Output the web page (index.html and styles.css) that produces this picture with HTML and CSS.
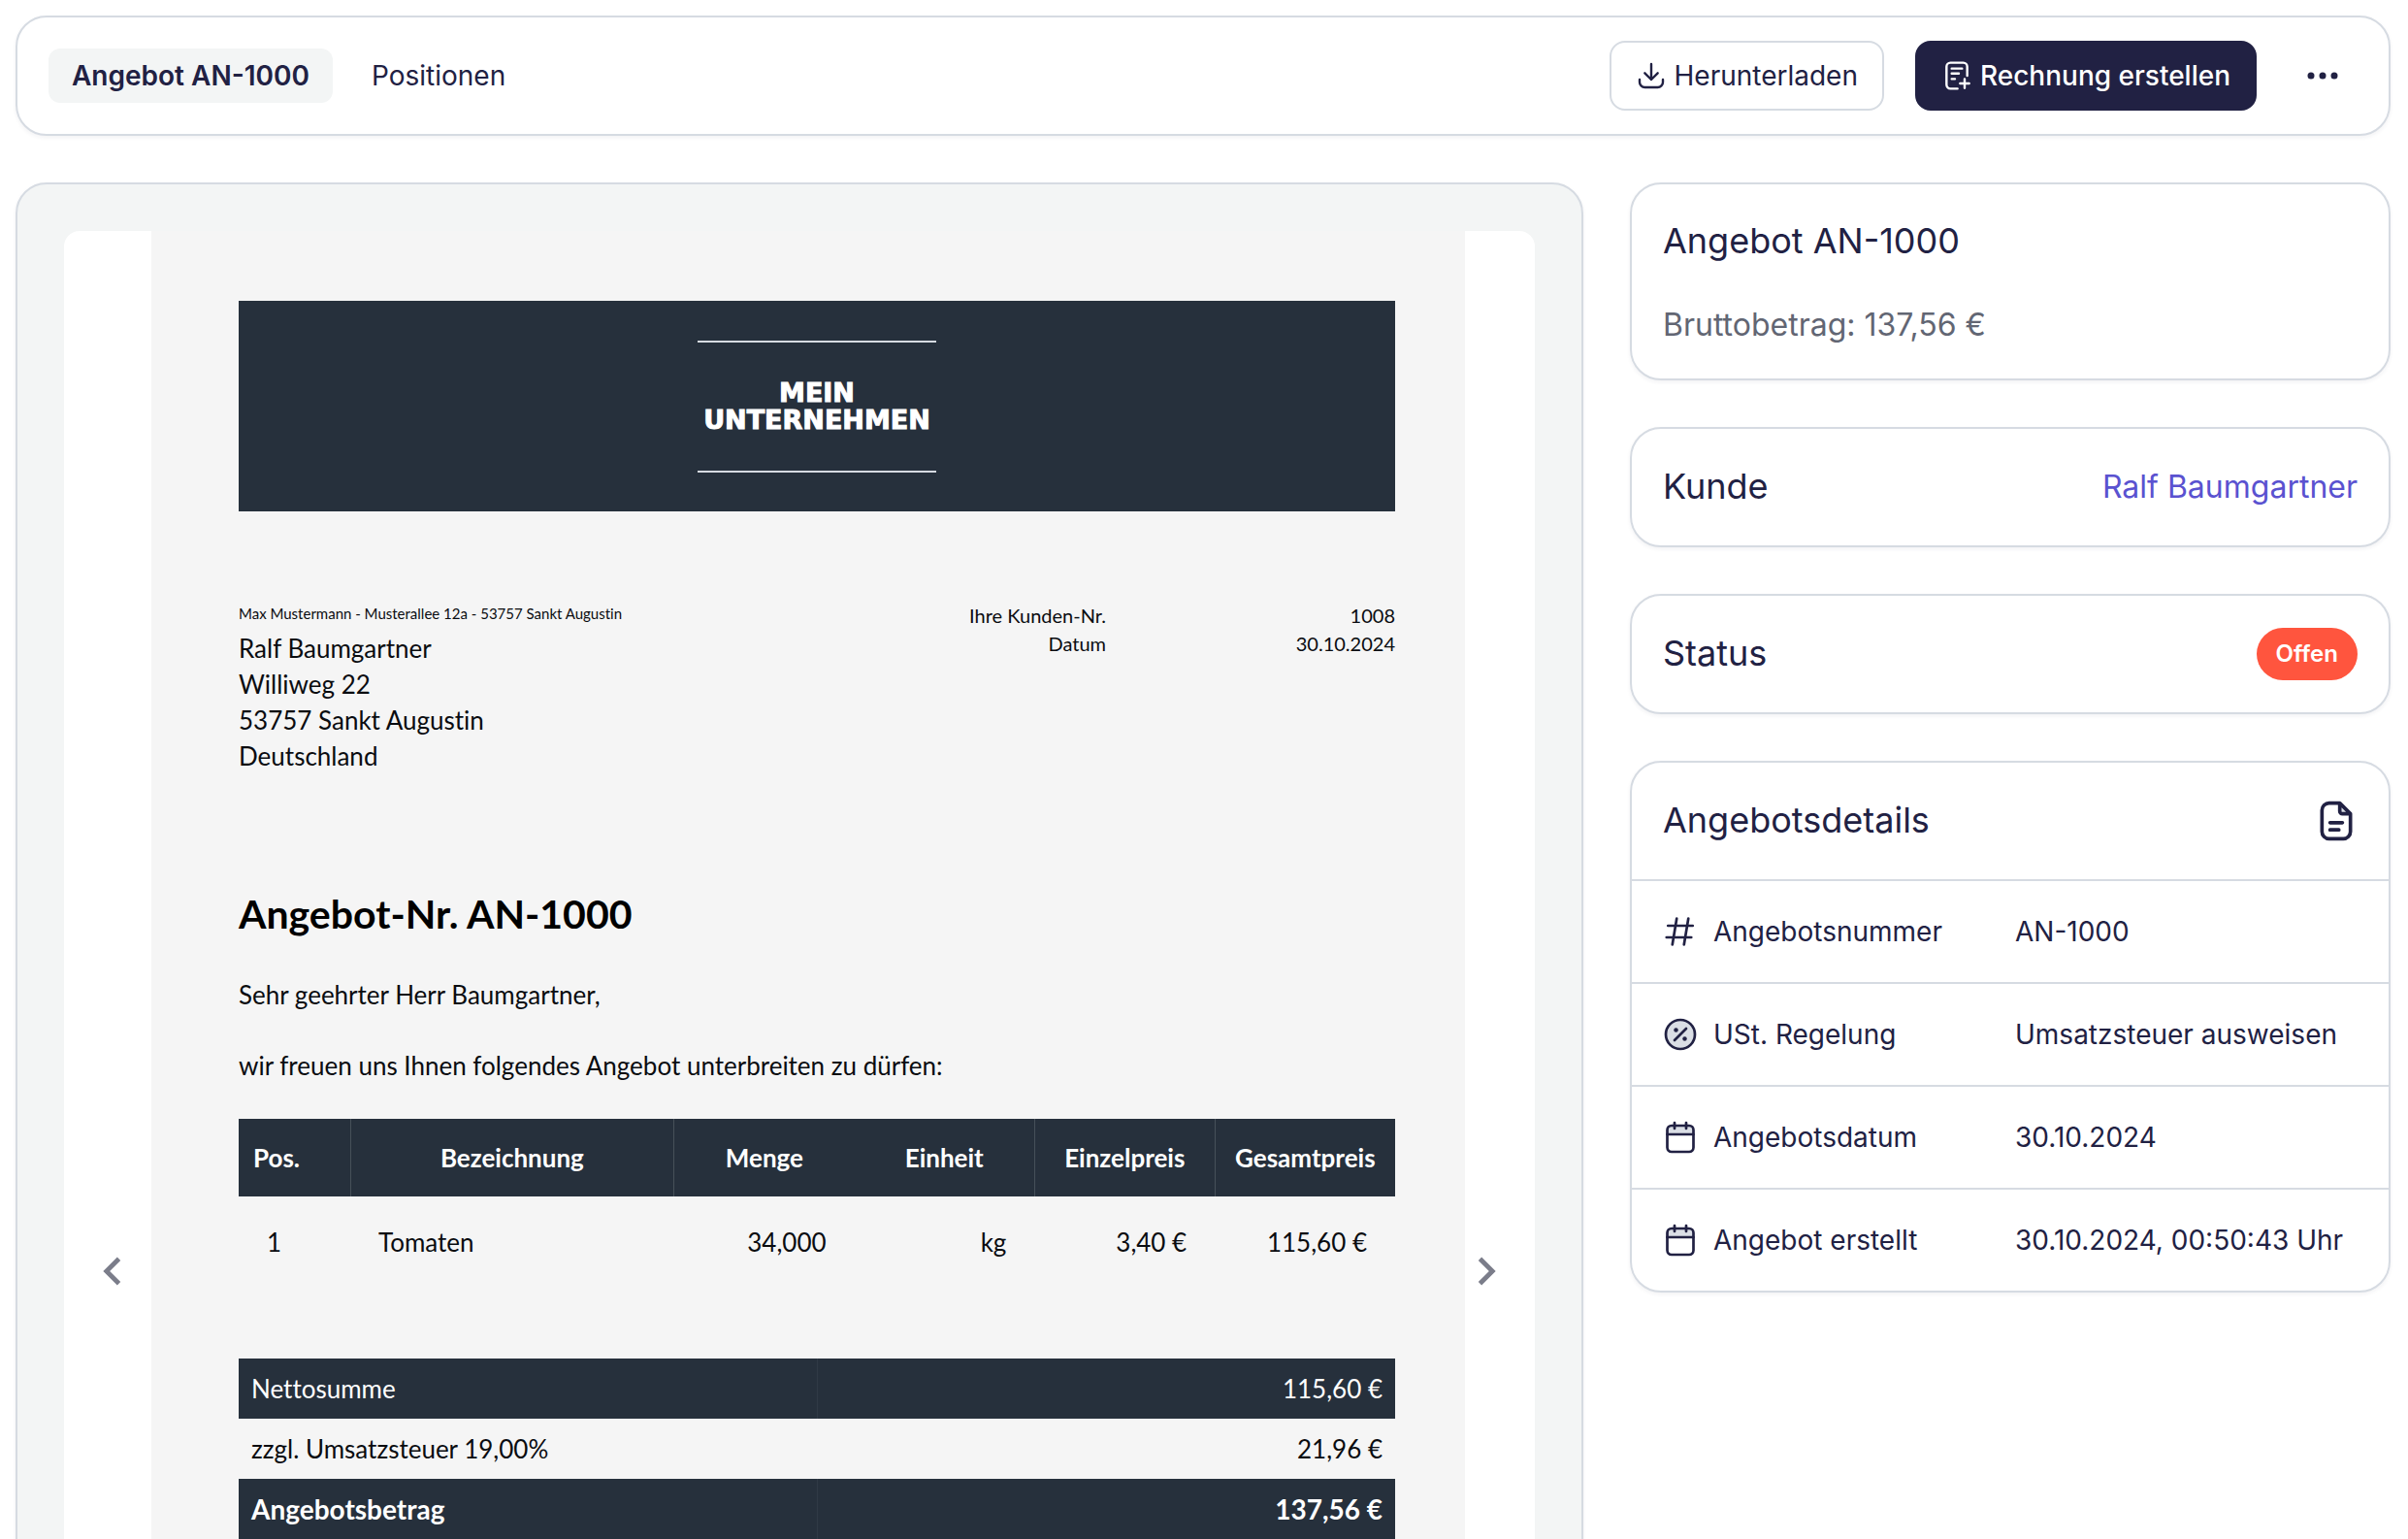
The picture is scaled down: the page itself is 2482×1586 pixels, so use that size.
FILE: index.html
```html
<!DOCTYPE html>
<html lang="de">
<head>
<meta charset="utf-8">
<meta name="viewport" content="width=device-width, initial-scale=1">
<title>Angebot AN-1000</title>
<link rel="stylesheet" href="styles.css">
</head>
<body>
<div class="app">
  <header class="card topbar">
    <nav class="tabs">
      <a class="tab tab-active" href="#angebot" aria-current="page">Angebot AN-1000</a>
      <a class="tab" href="#positionen">Positionen</a>
    </nav>
    <div class="actions">
      <button class="button" type="button">
        <svg class="icon-small" viewBox="0 0 24 24" aria-hidden="true"><path d="M12 3v12M7 10l5 5 5-5M3 15v2a4 4 0 0 0 4 4h10a4 4 0 0 0 4-4v-2"/></svg>
        Herunterladen
      </button>
      <button class="button button-primary" type="button">
        <svg class="icon-small" viewBox="0 0 24 24" aria-hidden="true"><path d="M20 12V5a3 3 0 0 0-3-3H7a3 3 0 0 0-3 3v14a3 3 0 0 0 3 3h5.500M8 6.500h8M8 10.300h5.500M8 14.500h2.500M18 14.500v7M14.500 18h7"/></svg>
        Rechnung erstellen
      </button>
      <button class="more" type="button" aria-label="Weitere Aktionen">
        <svg class="more-icon" viewBox="0 0 32 8" aria-hidden="true"><circle cx="4" cy="4" r="3.500"/><circle cx="16" cy="4" r="3.500"/><circle cx="28" cy="4" r="3.500"/></svg>
      </button>
    </div>
  </header>

  <main class="columns">
    <section class="card preview" id="angebot">
      <div class="viewer">
        <button class="page-nav page-prev" type="button" aria-label="Vorherige Seite">
          <svg class="chevron" viewBox="0 0 24 24" aria-hidden="true"><path d="M15.410 7.410 14 6l-6 6 6 6 1.410-1.410L10.830 12z"/></svg>
        </button>
        <button class="page-nav page-next" type="button" aria-label="Nächste Seite">
          <svg class="chevron" viewBox="0 0 24 24" aria-hidden="true"><path d="M8.590 16.590 10 18l6-6-6-6-1.410 1.410L13.170 12z"/></svg>
        </button>
        <article class="sheet">
          <div class="banner">
            <div class="logo">MEIN<br>UNTERNEHMEN</div>
          </div>
          <div class="letterhead">
            <div>
              <p class="sender">Max Mustermann - Musterallee 12a - 53757 Sankt Augustin</p>
              <address class="address">Ralf Baumgartner<br>Williweg 22<br>53757 Sankt Augustin<br>Deutschland</address>
            </div>
            <dl class="meta">
              <dt>Ihre Kunden-Nr.</dt><dd>1008</dd>
              <dt>Datum</dt><dd>30.10.2024</dd>
            </dl>
          </div>
          <h1 class="sheet-title">Angebot-Nr. AN-1000</h1>
          <p class="copy">Sehr geehrter Herr Baumgartner,</p>
          <p class="copy">wir freuen uns Ihnen folgendes Angebot unterbreiten zu dürfen:</p>
          <table class="items">
            <colgroup><col class="col-pos"><col class="col-name"><col><col><col><col></colgroup>
            <thead>
              <tr><th class="start">Pos.</th><th>Bezeichnung</th><th>Menge</th><th class="plain">Einheit</th><th>Einzelpreis</th><th>Gesamtpreis</th></tr>
            </thead>
            <tbody>
              <tr><td class="start">1</td><td class="start">Tomaten</td><td>34,000</td><td>kg</td><td>3,40 €</td><td>115,60 €</td></tr>
            </tbody>
          </table>
          <table class="totals">
            <tbody>
              <tr class="dark"><th>Nettosumme</th><td>115,60 €</td></tr>
              <tr><th>zzgl. Umsatzsteuer 19,00%</th><td>21,96 €</td></tr>
              <tr class="dark grand"><th>Angebotsbetrag</th><td>137,56 €</td></tr>
            </tbody>
          </table>
        </article>
      </div>
    </section>

    <aside class="sidebar">
      <section class="card panel summary">
        <h2 class="panel-title">Angebot AN-1000</h2>
        <p class="gross">Bruttobetrag: 137,56 €</p>
      </section>
      <section class="card panel panel-row">
        <h2 class="panel-title">Kunde</h2>
        <a class="customer" href="#kunde">Ralf Baumgartner</a>
      </section>
      <section class="card panel panel-row">
        <h2 class="panel-title">Status</h2>
        <span class="badge">Offen</span>
      </section>
      <section class="card">
        <div class="panel panel-row">
          <h2 class="panel-title">Angebotsdetails</h2>
          <svg class="icon-large" viewBox="0 0 24 24" aria-hidden="true"><path class="tint" d="M14 2v4.500A1.500 1.500 0 0 0 15.500 8H20z"/><path d="M14 2H8a4 4 0 0 0-4 4v12a4 4 0 0 0 4 4h8a4 4 0 0 0 4-4V8zM14 2v4.500A1.500 1.500 0 0 0 15.500 8H20M8.500 13h7M8.500 17h5"/></svg>
        </div>
        <dl class="details">
          <div class="detail">
            <dt><svg class="icon" viewBox="0 0 24 24" aria-hidden="true"><path d="M9.500 3l-3 18M17.500 3l-3 18M3.500 8h17M2.500 16h17"/></svg>Angebotsnummer</dt>
            <dd>AN-1000</dd>
          </div>
          <div class="detail">
            <dt><svg class="icon" viewBox="0 0 24 24" aria-hidden="true"><circle class="tinted" cx="12" cy="12" r="10"/><path d="M8 16l8-8"/><circle class="dot" cx="9" cy="9" r="1.500"/><circle class="dot" cx="15" cy="15" r="1.500"/></svg>USt. Regelung</dt>
            <dd>Umsatzsteuer ausweisen</dd>
          </div>
          <div class="detail">
            <dt><svg class="icon" viewBox="0 0 24 24" aria-hidden="true"><path class="tint" d="M3 10V7a3 3 0 0 1 3-3h12a3 3 0 0 1 3 3v3z"/><rect x="3" y="4" width="18" height="18" rx="3"/><path d="M3 10h18M8 2v4M16 2v4"/></svg>Angebotsdatum</dt>
            <dd>30.10.2024</dd>
          </div>
          <div class="detail">
            <dt><svg class="icon" viewBox="0 0 24 24" aria-hidden="true"><path class="tint" d="M3 10V7a3 3 0 0 1 3-3h12a3 3 0 0 1 3 3v3z"/><rect x="3" y="4" width="18" height="18" rx="3"/><path d="M3 10h18M8 2v4M16 2v4"/></svg>Angebot erstellt</dt>
            <dd>30.10.2024, 00:50:43 Uhr</dd>
          </div>
        </dl>
      </section>
    </aside>
  </main>
</div>
</body>
</html>
```
FILE: styles.css
```css
:root {
  --ink: #212143;
  --line: #d6dbe2;
  --tint: #dadee5;
  --slate: #26303c;
}

* { box-sizing: border-box; }

body {
  margin: 0;
  background: #fff;
  color: var(--ink);
  font: 28px/40px Inter, "Liberation Sans", sans-serif;
}

h1, h2, p, dl, dd { margin: 0; }
button { font: inherit; color: inherit; cursor: pointer; }
a { text-decoration: none; color: inherit; }

/* The app is one scrolling pane that fills the window. */
.app {
  height: 100vh;
  overflow-y: auto;
  scrollbar-width: none;
  padding: 16px 18px 16px 16px;
}

.card {
  border: 2px solid var(--line);
  border-radius: 32px;
  background: #fff;
  box-shadow: 0 2px 4px rgba(33, 33, 67, 0.06);
}

svg {
  display: block;
  flex: none;
  fill: none;
  stroke: currentColor;
  stroke-width: 1.8;
  stroke-linecap: round;
  stroke-linejoin: round;
}
.icon-small { width: 32px; height: 32px; }
.icon { width: 36px; height: 36px; }
.icon-large { width: 44px; height: 44px; stroke-width: 2; }
.tint { fill: var(--tint); stroke: none; }
.tinted { fill: var(--tint); }
.dot { fill: currentColor; stroke: none; }

/* Top bar */
.topbar {
  display: flex;
  flex-wrap: wrap;
  align-items: center;
  justify-content: space-between;
  gap: 24px;
  padding: 24px 32px;
}
.tabs { display: flex; gap: 16px; }
.tab { padding: 8px 24px; border-radius: 12px; }
.tab-active { background: #f3f5f5; font-weight: 600; }
.actions { display: flex; align-items: center; gap: 32px; }
.button {
  display: flex;
  align-items: center;
  gap: 8px;
  padding: 14px 25px;
  border: 2px solid var(--line);
  border-radius: 16px;
  background: #fff;
}
.button-primary {
  border-color: var(--ink);
  background: var(--ink);
  color: #fff;
  font-weight: 500;
}
.more {
  display: grid;
  place-items: center;
  width: 72px;
  height: 72px;
  padding: 0;
  border: 0;
  background: none;
}
.more-icon { width: 32px; height: 8px; fill: currentColor; stroke: none; }

/* Main area */
.columns {
  display: grid;
  grid-template-columns: 101fr 49fr;
  align-items: start;
  gap: 48px;
  margin-top: 48px;
}
.preview { padding: 48px; background: #f3f5f5; }
.viewer {
  position: relative;
  display: flex;
  aspect-ratio: 210 / 297;
  padding: 0 72px 0 90px;
  border-radius: 16px;
  background: #fff;
}
.page-nav {
  position: absolute;
  top: 50%;
  display: grid;
  place-items: center;
  width: 60px;
  height: 60px;
  margin-top: -30px;
  padding: 0;
  border: 0;
  background: none;
  color: #7b7d8a;
}
.page-prev { left: 20px; }
.page-next { right: 20px; }
.chevron { width: 58px; height: 58px; fill: currentColor; stroke: none; }

/* Document sheet */
.sheet {
  flex: 1;
  min-width: 0;
  padding: 72px 72px 72px 90px;
  background: #f5f5f5;
  color: #0a0c10;
  font: 26px/37px Lato, "Liberation Sans", sans-serif;
  font-variant-ligatures: none;
}
.banner {
  display: grid;
  place-items: center;
  height: 217px;
  background: var(--slate);
}
.logo {
  padding: 38px 6px;
  border-top: 2px solid #d6dbe2;
  border-bottom: 2px solid #d6dbe2;
  color: #fff;
  font: 700 27px/28px "DejaVu Sans", sans-serif;
  -webkit-text-stroke: 1px #fff;
  text-align: center;
}
.letterhead {
  display: flex;
  justify-content: space-between;
  margin-top: 93px;
}
.sender { margin-bottom: 6px; font-size: 15px; line-height: 24px; }
.address { font-style: normal; }
.meta {
  display: grid;
  grid-template-columns: auto 298px;
  align-content: start;
  font-size: 20px;
  line-height: 29px;
  text-align: right;
}
.sheet-title {
  margin: 120px 0 41px;
  color: #000;
  font-size: 41px;
  font-weight: 700;
  line-height: 48px;
}
.copy { margin-bottom: 36px; }

.items, .totals {
  width: 100%;
  border-collapse: collapse;
  table-layout: fixed;
}
.items { margin-bottom: 73px; }
.col-pos { width: 115px; }
.col-name { width: 28%; }
.items th {
  height: 80px;
  padding: 0;
  background: var(--slate);
  color: #fff;
  font-weight: 700;
  text-align: center;
}
.items th + th:not(.plain) { border-left: 1px solid #465059; }
.items th.start { padding-left: 15px; text-align: left; }
.items td { padding: 29px 29px 28px; text-align: right; }
.items td.start { text-align: left; }

.totals th, .totals td {
  height: 62px;
  padding: 0 13px;
  font-weight: 400;
  text-align: left;
}
.totals td { text-align: right; }
.totals .dark { background: var(--slate); color: #fff; }
.totals .dark td { border-left: 1px solid #303a46; }
.totals .grand th, .totals .grand td { font-size: 28px; font-weight: 700; }

/* Sidebar */
.sidebar { display: grid; gap: 48px; }
.panel { padding: 34px 32px 33px; }
.panel-row {
  display: flex;
  align-items: center;
  justify-content: space-between;
  gap: 24px;
  min-height: 120px;
  padding-block: 24px;
}
.card.panel-row { min-height: 124px; }
.panel-title { padding-bottom: 3px; font-size: 36px; font-weight: 400; line-height: 48px; }
.gross {
  margin-top: 38px;
  color: #626673;
  font-size: 32px;
  line-height: 44px;
}
.customer { color: #5a52d0; font-size: 32px; line-height: 44px; }
.badge {
  padding: 11px 20px;
  border-radius: 27px;
  background: #ff553e;
  color: #fff;
  font-size: 24px;
  font-weight: 600;
  line-height: 32px;
}
.detail {
  display: grid;
  grid-template-columns: 363px 1fr;
  align-items: center;
  min-height: 106px;
  padding: 0 32px;
  border-top: 2px solid var(--line);
}
.detail dt { display: flex; align-items: center; gap: 16px; }
```
